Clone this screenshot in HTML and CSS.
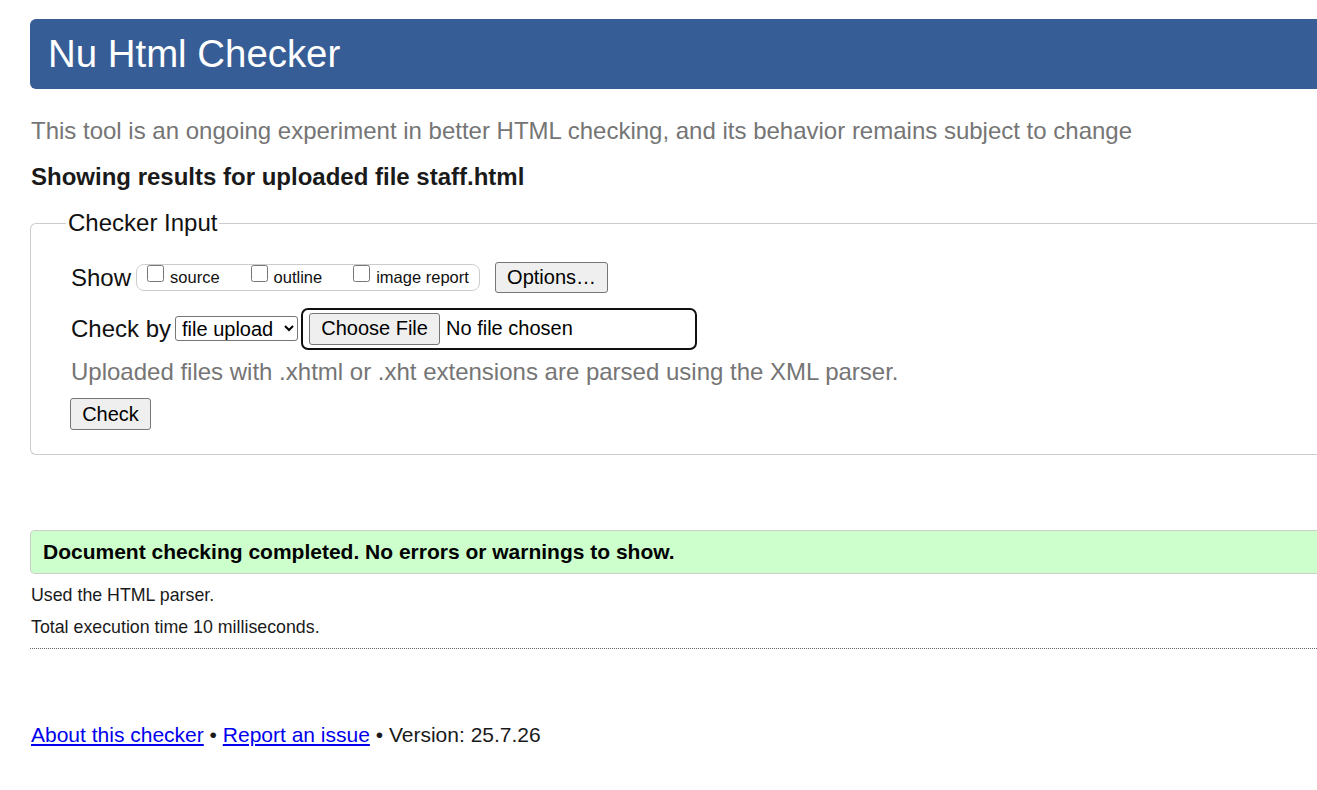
FILE: index.html
```html
<!DOCTYPE html>
<html lang="en">
<head>
<meta charset="utf-8">
<title>Nu Html Checker</title>
<link rel="stylesheet" href="styles.css">
</head>
<body>
<div class="page">
  <h1 class="title">Nu Html Checker</h1>
  <p class="intro">This tool is an ongoing experiment in better HTML checking, and its behavior remains subject to change</p>
  <p class="showing">Showing results for uploaded file staff.html</p>
  <fieldset class="input">
    <legend class="legend">Checker Input</legend>
    <div class="row show-row">
      <span class="label">Show</span>
      <span class="group">
        <label class="opt"><input type="checkbox" class="cb">source</label>
        <label class="opt"><input type="checkbox" class="cb">outline</label>
        <label class="opt"><input type="checkbox" class="cb">image report</label>
      </span>
      <button type="button" class="btn options">Options…</button>
    </div>
    <div class="row check-row">
      <span class="label">Check by</span>
      <select class="sel"><option>file upload</option></select>
      <span class="file">
        <button type="button" class="btn choose">Choose File</button>
        <span class="nofile">No file chosen</span>
      </span>
    </div>
    <p class="hint">Uploaded files with .xhtml or .xht extensions are parsed using the XML parser.</p>
    <button type="button" class="btn check">Check</button>
  </fieldset>
  <div class="success">Document checking completed. No errors or warnings to show.</div>
  <p class="details">Used the HTML parser.</p>
  <p class="details">Total execution time 10 milliseconds.</p>
  <div class="divider"></div>
  <p class="footer"><a href="#">About this checker</a> • <a href="#">Report an issue</a> • Version: 25.7.26</p>
</div>
</body>
</html>
```

FILE: styles.css
```css
html, body {
  margin: 0;
  padding: 0;
  background: #fff;
}
body {
  font-family: "Liberation Sans", Arial, sans-serif;
  color: #111;
}
.page {
  padding: 19px 0 0 30px;
}
.title {
  margin: 0;
  height: 70px;
  box-sizing: border-box;
  background: #365d95;
  color: #fff;
  font-weight: normal;
  font-size: 38.4px;
  line-height: 70px;
  padding-left: 18px;
  border-radius: 6px 0 0 6px;
}
.intro {
  margin: 28px 0 0 1px;
  color: #757575;
  font-size: 24px;
  line-height: 28px;
}
.showing {
  margin: 18px 0 0 1px;
  font-size: 24px;
  font-weight: bold;
  line-height: 28px;
  color: #1a1a1a;
}
.input {
  margin: 18px 0 0 0;
  padding: 0 0 24px 40px;
  border: 1px solid #ccc;
  border-radius: 6px 0 0 6px;
  border-right: none;
}
.legend {
  font-size: 24px;
  padding: 0 2px;
  margin-left: -5px;
  line-height: 28px;
  color: #111;
}
.row {
  display: flex;
  align-items: center;
}
.label {
  font-size: 24px;
}
.show-row {
  height: 31px;
  margin-top: 25px;
}
.show-row .label {
  margin-right: 5px;
}
.group {
  display: flex;
  align-items: center;
  height: 27px;
  box-sizing: border-box;
  border: 1px solid #ccc;
  border-radius: 8px;
  padding: 0 9px 0 10px;
  font-size: 16.5px;
  width: 344px;
}
.opt {
  display: flex;
  align-items: center;
  margin-right: 31px;
  color: #111;
}
.opt:last-child { margin-right: 0; }
.cb {
  width: 17px;
  height: 17px;
  margin: 0 6px 0 0;
  position: relative;
  top: -4px;
}
.btn {
  font-family: "Liberation Sans", Arial, sans-serif;
  font-size: 20px;
  color: #000;
  background: #efefef;
  border: 1px solid #767676;
  border-radius: 3px;
  padding: 0 11px;
  height: 31px;
}
.options {
  margin-left: 15px;
  width: 113px;
}
.check-row {
  margin-top: 15px;
  height: 41px;
}
.check-row .label {
  margin-right: 4px;
}
.sel {
  font-family: "Liberation Sans", Arial, sans-serif;
  font-size: 20px;
  height: 25px;
  width: 123px;
  border: 1px solid #767676;
  border-radius: 3px;
  background: #fff;
  color: #000;
  padding: 0 0 0 2px;
}
.file {
  display: flex;
  align-items: center;
  margin-left: 3px;
  width: 396px;
  height: 42px;
  box-sizing: border-box;
  border: 2px solid #101010;
  border-radius: 7px;
  padding-left: 6px;
}
.choose {
  width: 131px;
  height: 32px;
}
.nofile {
  font-size: 20px;
  margin-left: 6px;
  color: #000;
}
.hint {
  margin: 9px 0 0 0;
  font-size: 24px;
  color: #757575;
  line-height: 28px;
}
.check {
  display: block;
  margin: 12px 0 0 -1px;
  width: 81px;
  height: 32px;
}
.success {
  margin-top: 75px;
  height: 44px;
  box-sizing: border-box;
  background: #ccffcc;
  border: 1px solid #ccc;
  border-right: none;
  border-radius: 5px 0 0 5px;
  padding-left: 12px;
  font-weight: bold;
  font-size: 21px;
  line-height: 42px;
  color: #000;
}
.details {
  margin: 10px 0 0 1px;
  font-size: 17.8px;
  line-height: 22px;
  color: #1a1a1a;
}
.details + .details {
  margin-top: 10px;
}
.divider {
  margin-top: 10px;
  border-bottom: 1px dotted #666;
}
.footer {
  margin: 74px 0 0 1px;
  font-size: 21px;
  line-height: 24px;
  color: #1a1a1a;
}
.footer a {
  color: #0000ee;
}
```
